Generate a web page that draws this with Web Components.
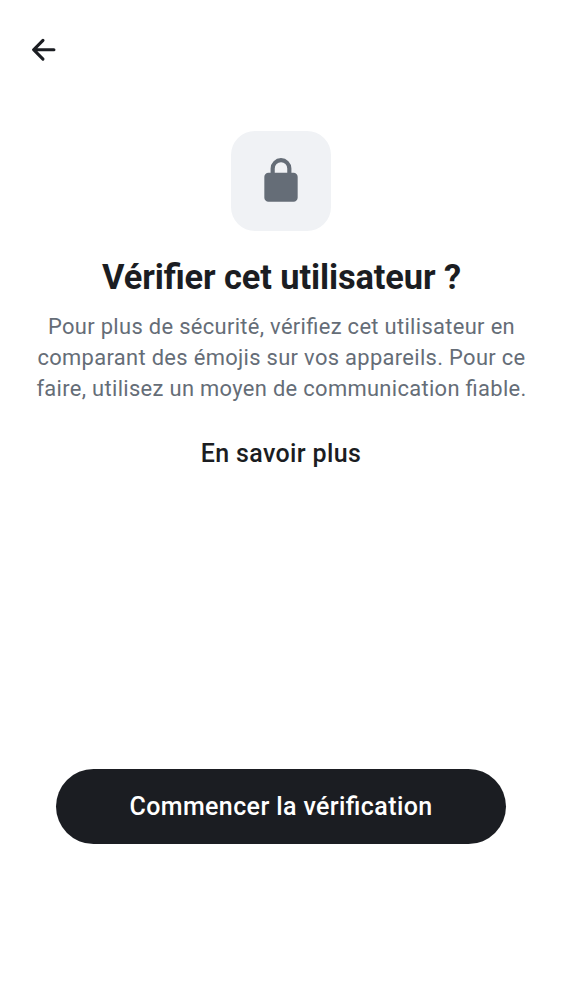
<!DOCTYPE html>
<html lang="fr"><head><meta charset="utf-8"><title>Vérification</title>
<style>body{margin:0;background:#fff;font-family:Roboto,sans-serif;color:#1b1d22;font-feature-settings:"liga" 1}</style></head>
<body>
<verify-screen>
<back-button slot="top"></back-button>
<lock-tile></lock-tile>
<page-heading>Vérifier cet utilisateur ?</page-heading>
<body-copy><span>Pour plus de sécurité, vérifiez cet utilisateur en</span><span>comparant des émojis sur vos appareils. Pour ce</span><span>faire, utilisez un moyen de communication fiable.</span></body-copy>
<text-link>En savoir plus</text-link>
<primary-button slot="footer">Commencer la vérification</primary-button>
</verify-screen>
<script>
const define=(name,html)=>customElements.define(name,class extends HTMLElement{
  constructor(){super();this.attachShadow({mode:"open"}).innerHTML=html;}
});
define("verify-screen",`<style>:host{display:flex;flex-direction:column;box-sizing:border-box;height:1000px;padding-bottom:156px}
header{height:100px;display:flex;align-items:center;padding-left:25px;box-sizing:border-box}
main{flex:1;display:flex;flex-direction:column;align-items:center;padding-top:31px}
footer{padding:0 56px}</style><header><slot name="top"></slot></header><main><slot></slot></main><footer><slot name="footer"></slot></footer>`);
define("back-button",`<style>:host{display:block;width:37.5px;height:37.5px}button{all:unset;display:block}svg{display:block}</style>
<button aria-label="Retour"><svg width="37.5" height="37.5" viewBox="0 0 24 24" fill="#1b1d22"><path d="m12.207 5.293-.006-.006a1 1 0 0 0-1.408.006l-6 6a1 1 0 0 0 0 1.414l6 6a1 1 0 0 0 1.414-1.414L7.914 13H18.5a1 1 0 1 0 0-2H7.914l4.293-4.293a1 1 0 0 0 0-1.414Z"/></svg></button>`);
define("lock-tile",`<style>:host{display:flex;width:100px;height:100px;border-radius:24px;background:#f0f2f5;align-items:center;justify-content:center}svg{display:block}</style>
<svg width="50" height="50" viewBox="0 0 24 24" fill="#656d77"><path d="M6 22q-.825 0-1.412-.587A1.93 1.93 0 0 1 4 20V10q0-.825.588-1.412A1.93 1.93 0 0 1 6 8h1V6q0-2.075 1.463-3.537Q9.926 1 12 1t3.537 1.463T17 6v2h1q.824 0 1.413.588Q20 9.175 20 10v10q0 .824-.587 1.413A1.93 1.93 0 0 1 18 22zM9 8h6V6q0-1.25-.875-2.125A2.9 2.9 0 0 0 12 3q-1.25 0-2.125.875A2.9 2.9 0 0 0 9 6z"/></svg>`);
define("page-heading",`<style>:host{display:block;margin-top:24px;padding-left:1px}h1{margin:0;font-size:34.4px;line-height:44px;font-weight:700;letter-spacing:-.1px;white-space:nowrap}</style><h1><slot></slot></h1>`);
define("body-copy",`<style>:host{display:block;margin-top:12px;padding-left:1px}p{margin:0;font-size:21.9px;line-height:31px;letter-spacing:.33px;color:#656d77;text-align:center;white-space:nowrap}::slotted(span){display:block}</style><p><slot></slot></p>`);
define("text-link",`<style>:host{display:block;margin-top:31px}button{all:unset;display:block;font-size:25px;line-height:38px;font-weight:500;letter-spacing:.36px;font-feature-settings:"liga" 1}</style><button><slot></slot></button>`);
define("primary-button",`<style>:host{display:block}button{all:unset;box-sizing:border-box;width:100%;height:75px;border-radius:38px;background:#1b1d22;color:#fff;display:flex;align-items:center;justify-content:center;font-size:25px;font-weight:500;letter-spacing:.39px;font-feature-settings:"liga" 1}</style><button><slot></slot></button>`);
</script></body></html>
